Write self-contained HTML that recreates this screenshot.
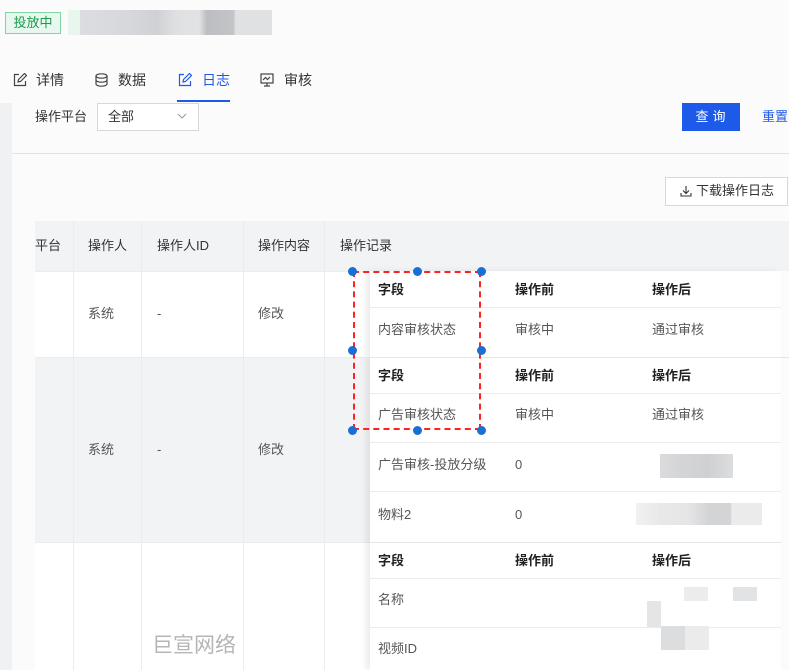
<!DOCTYPE html>
<html><head><meta charset="utf-8"><style>
*{margin:0;padding:0;box-sizing:border-box}
body{width:789px;height:670px;overflow:hidden;background:#fbfbfc;font-family:"Liberation Sans","Noto Sans CJK SC",sans-serif;font-size:13px;color:#333;position:relative}
.a{position:absolute;white-space:nowrap}
.t{line-height:16px}
.b{background:#fff}
.hl{position:absolute;height:1px;background:#ebecee}
.vl{position:absolute;width:1px;background:#ebecee}
.dot{position:absolute;width:9px;height:9px;border-radius:50%;background:#1a6fd6}
</style></head><body>
<!-- top -->
<div class="a" style="left:5px;top:12px;width:56px;height:22px;border:1px solid #7fd6a4;background:#e8f8ee;color:#1b9a4e;font-size:13px;line-height:20px;text-align:center">投放中</div>
<div class="a" style="left:68px;top:10px;width:12px;height:25px;background:#e9f6ee"></div>
<div class="a" style="left:80px;top:10px;width:192px;height:25px;background:linear-gradient(90deg,#dcdde0 0,#d7d8db 25%,#d0d1d4 40%,#dfe0e2 50%,#e2e3e5 62%,#bdbec2 66%,#c3c4c7 80%,#e0e1e3 81%)"></div>
<!-- tabs -->
<svg class="a" style="left:13px;top:73px" width="14" height="14" viewBox="0 0 14 14" fill="none" stroke="#444" stroke-width="1.2"><path d="M6 1.5H1.5v11h11V8"/><path d="M5 9l.5-2.5 6-6 2 2-6 6z"/></svg>
<div class="a t" style="left:36px;top:72px;font-size:14px;color:#333">详情</div>
<svg class="a" style="left:95px;top:73px" width="13" height="14" viewBox="0 0 13 14" fill="none" stroke="#444" stroke-width="1.2"><ellipse cx="6.5" cy="3" rx="5.5" ry="2.2"/><path d="M1 3v8c0 1.2 2.5 2.2 5.5 2.2S12 12.2 12 11V3M1 7c0 1.2 2.5 2.2 5.5 2.2S12 8.2 12 7"/></svg>
<div class="a t" style="left:118px;top:72px;font-size:14px;color:#333">数据</div>
<svg class="a" style="left:178px;top:73px" width="14" height="14" viewBox="0 0 14 14" fill="none" stroke="#1f5ae6" stroke-width="1.2"><path d="M6 1.5H1.5v11h11V8"/><path d="M5 9l.5-2.5 6-6 2 2-6 6z"/></svg>
<div class="a t" style="left:202px;top:72px;font-size:14px;color:#1f5ae6">日志</div>
<div class="a" style="left:177px;top:100px;width:53px;height:2px;background:#1f5ae6"></div>
<svg class="a" style="left:260px;top:73px" width="14" height="14" viewBox="0 0 14 14" fill="none" stroke="#444" stroke-width="1.2"><rect x="1" y="1" width="12" height="9"/><path d="M3 7l2.5-2.5 2 2L10 4M4 13h6M7 10v3"/></svg>
<div class="a t" style="left:284px;top:72px;font-size:14px;color:#333">审核</div>
<!-- left strip -->
<div class="a" style="left:0;top:103px;width:12px;height:567px;background:#f0f1f3"></div>
<!-- filter -->
<div class="a t" style="left:35px;top:109px;color:#333">操作平台</div>
<div class="a b" style="left:97px;top:103px;width:102px;height:28px;border:1px solid #d6d8dc"></div>
<div class="a t" style="left:108px;top:109px;color:#333">全部</div>
<svg class="a" style="left:177px;top:113px" width="10" height="7" viewBox="0 0 10 7" fill="none" stroke="#999" stroke-width="1"><path d="M1 1l4 4 4-4"/></svg>
<div class="a" style="left:682px;top:103px;width:58px;height:28px;background:#1e5ae9;color:#fff;line-height:28px;text-align:center;letter-spacing:4px;padding-left:3px">查询</div>
<div class="a t" style="left:762px;top:109px;color:#1e5ae9">重置</div>
<div class="hl" style="left:12px;top:153px;width:777px;background:#e2e3e6"></div>
<div class="a b" style="left:665px;top:177px;width:123px;height:29px;border:1px solid #d6d8dc"></div>
<svg class="a" style="left:680px;top:185px" width="12" height="12" viewBox="0 0 12 12" fill="none" stroke="#333" stroke-width="1.1"><path d="M6 1v7M3 5.5L6 8.5 9 5.5M1 8v3h10V8"/></svg>
<div class="a t" style="left:696px;top:183px;color:#333">下载操作日志</div>
<!-- table -->
<div class="a" style="left:35px;top:221px;width:754px;height:50px;background:#f2f3f5"></div>
<div class="a b" style="left:35px;top:271px;width:335px;height:86px"></div>
<div class="a" style="left:35px;top:357px;width:335px;height:185px;background:#f2f3f5"></div>
<div class="a b" style="left:35px;top:542px;width:335px;height:128px"></div>
<div class="vl" style="left:73px;top:221px;height:449px"></div>
<div class="vl" style="left:141px;top:221px;height:449px"></div>
<div class="vl" style="left:243px;top:221px;height:449px"></div>
<div class="vl" style="left:324px;top:221px;height:449px"></div>
<div class="hl" style="left:35px;top:271px;width:335px"></div>
<div class="hl" style="left:35px;top:357px;width:335px"></div>
<div class="hl" style="left:35px;top:542px;width:335px"></div>
<div class="a t" style="left:35px;top:238px">平台</div>
<div class="a t" style="left:88px;top:238px">操作人</div>
<div class="a t" style="left:157px;top:238px">操作人ID</div>
<div class="a t" style="left:258px;top:238px">操作内容</div>
<div class="a t" style="left:340px;top:238px">操作记录</div>
<div class="a t" style="left:88px;top:306px;color:#555">系统</div>
<div class="a t" style="left:157px;top:306px;color:#555">-</div>
<div class="a t" style="left:258px;top:306px;color:#555">修改</div>
<div class="a t" style="left:88px;top:442px;color:#555">系统</div>
<div class="a t" style="left:157px;top:442px;color:#555">-</div>
<div class="a t" style="left:258px;top:442px;color:#555">修改</div>
<!-- nested -->
<div class="a b" style="left:370px;top:271px;width:411px;height:399px;box-shadow:-4px 0 6px rgba(0,0,0,.08)"></div>
<div class="hl" style="left:370px;top:307px;width:411px"></div>
<div class="hl" style="left:352px;top:357px;width:437px;background:#e4e5e8"></div>
<div class="hl" style="left:370px;top:393px;width:411px"></div>
<div class="hl" style="left:370px;top:442px;width:411px"></div>
<div class="hl" style="left:370px;top:491px;width:411px"></div>
<div class="hl" style="left:370px;top:542px;width:411px;background:#e4e5e8"></div>
<div class="hl" style="left:370px;top:578px;width:411px"></div>
<div class="hl" style="left:370px;top:627px;width:411px"></div>
<div class="a t" style="left:378px;top:282px;font-weight:bold;color:#222">字段</div>
<div class="a t" style="left:515px;top:282px;font-weight:bold;color:#222">操作前</div>
<div class="a t" style="left:652px;top:282px;font-weight:bold;color:#222">操作后</div>
<div class="a t" style="left:378px;top:322px;color:#555">内容审核状态</div>
<div class="a t" style="left:515px;top:322px;color:#555">审核中</div>
<div class="a t" style="left:652px;top:322px;color:#555">通过审核</div>
<div class="a t" style="left:378px;top:368px;font-weight:bold;color:#222">字段</div>
<div class="a t" style="left:515px;top:368px;font-weight:bold;color:#222">操作前</div>
<div class="a t" style="left:652px;top:368px;font-weight:bold;color:#222">操作后</div>
<div class="a t" style="left:378px;top:407px;color:#555">广告审核状态</div>
<div class="a t" style="left:515px;top:407px;color:#555">审核中</div>
<div class="a t" style="left:652px;top:407px;color:#555">通过审核</div>
<div class="a t" style="left:378px;top:457px;color:#555">广告审核-投放分级</div>
<div class="a t" style="left:515px;top:457px;color:#555">0</div>
<div class="a" style="left:660px;top:454px;width:73px;height:24px;background:linear-gradient(90deg,#dadbdd 0,#d3d4d6 33%,#cfd0d2 66%,#dcdddf 100%)"></div>
<div class="a t" style="left:378px;top:507px;color:#555">物料2</div>
<div class="a t" style="left:515px;top:507px;color:#555">0</div>
<div class="a" style="left:636px;top:503px;width:126px;height:22px;background:linear-gradient(90deg,#f1f1f2 0,#e8e8e9 20%,#e6e6e7 40%,#d3d4d6 58%,#d3d4d6 75%,#ebebec 76%)"></div>
<div class="a t" style="left:378px;top:553px;font-weight:bold;color:#222">字段</div>
<div class="a t" style="left:515px;top:553px;font-weight:bold;color:#222">操作前</div>
<div class="a t" style="left:652px;top:553px;font-weight:bold;color:#222">操作后</div>
<div class="a t" style="left:378px;top:592px;color:#555">名称</div>
<div class="a" style="left:684px;top:587px;width:24px;height:14px;background:#ececed"></div>
<div class="a" style="left:733px;top:587px;width:24px;height:14px;background:#e2e3e4"></div>
<div class="a" style="left:647px;top:601px;width:14px;height:26px;background:#e4e5e6"></div>
<div class="a" style="left:661px;top:626px;width:24px;height:24px;background:#dcdddf"></div>
<div class="a" style="left:685px;top:626px;width:24px;height:24px;background:#ebebec"></div>
<div class="a t" style="left:378px;top:641px;color:#555">视频ID</div>
<div class="a" style="left:152px;top:634px;font-size:21px;color:#b5b5b5;line-height:24px">巨宣网络</div>
<!-- red dashed selection -->
<div class="a" style="left:353px;top:271px;width:128px;height:159px;border:2px dashed #f22"></div>
<div class="dot" style="left:348px;top:267px"></div>
<div class="dot" style="left:413px;top:267px"></div>
<div class="dot" style="left:477px;top:267px"></div>
<div class="dot" style="left:348px;top:346px"></div>
<div class="dot" style="left:477px;top:346px"></div>
<div class="dot" style="left:348px;top:426px"></div>
<div class="dot" style="left:413px;top:426px"></div>
<div class="dot" style="left:477px;top:426px"></div>
</body></html>
